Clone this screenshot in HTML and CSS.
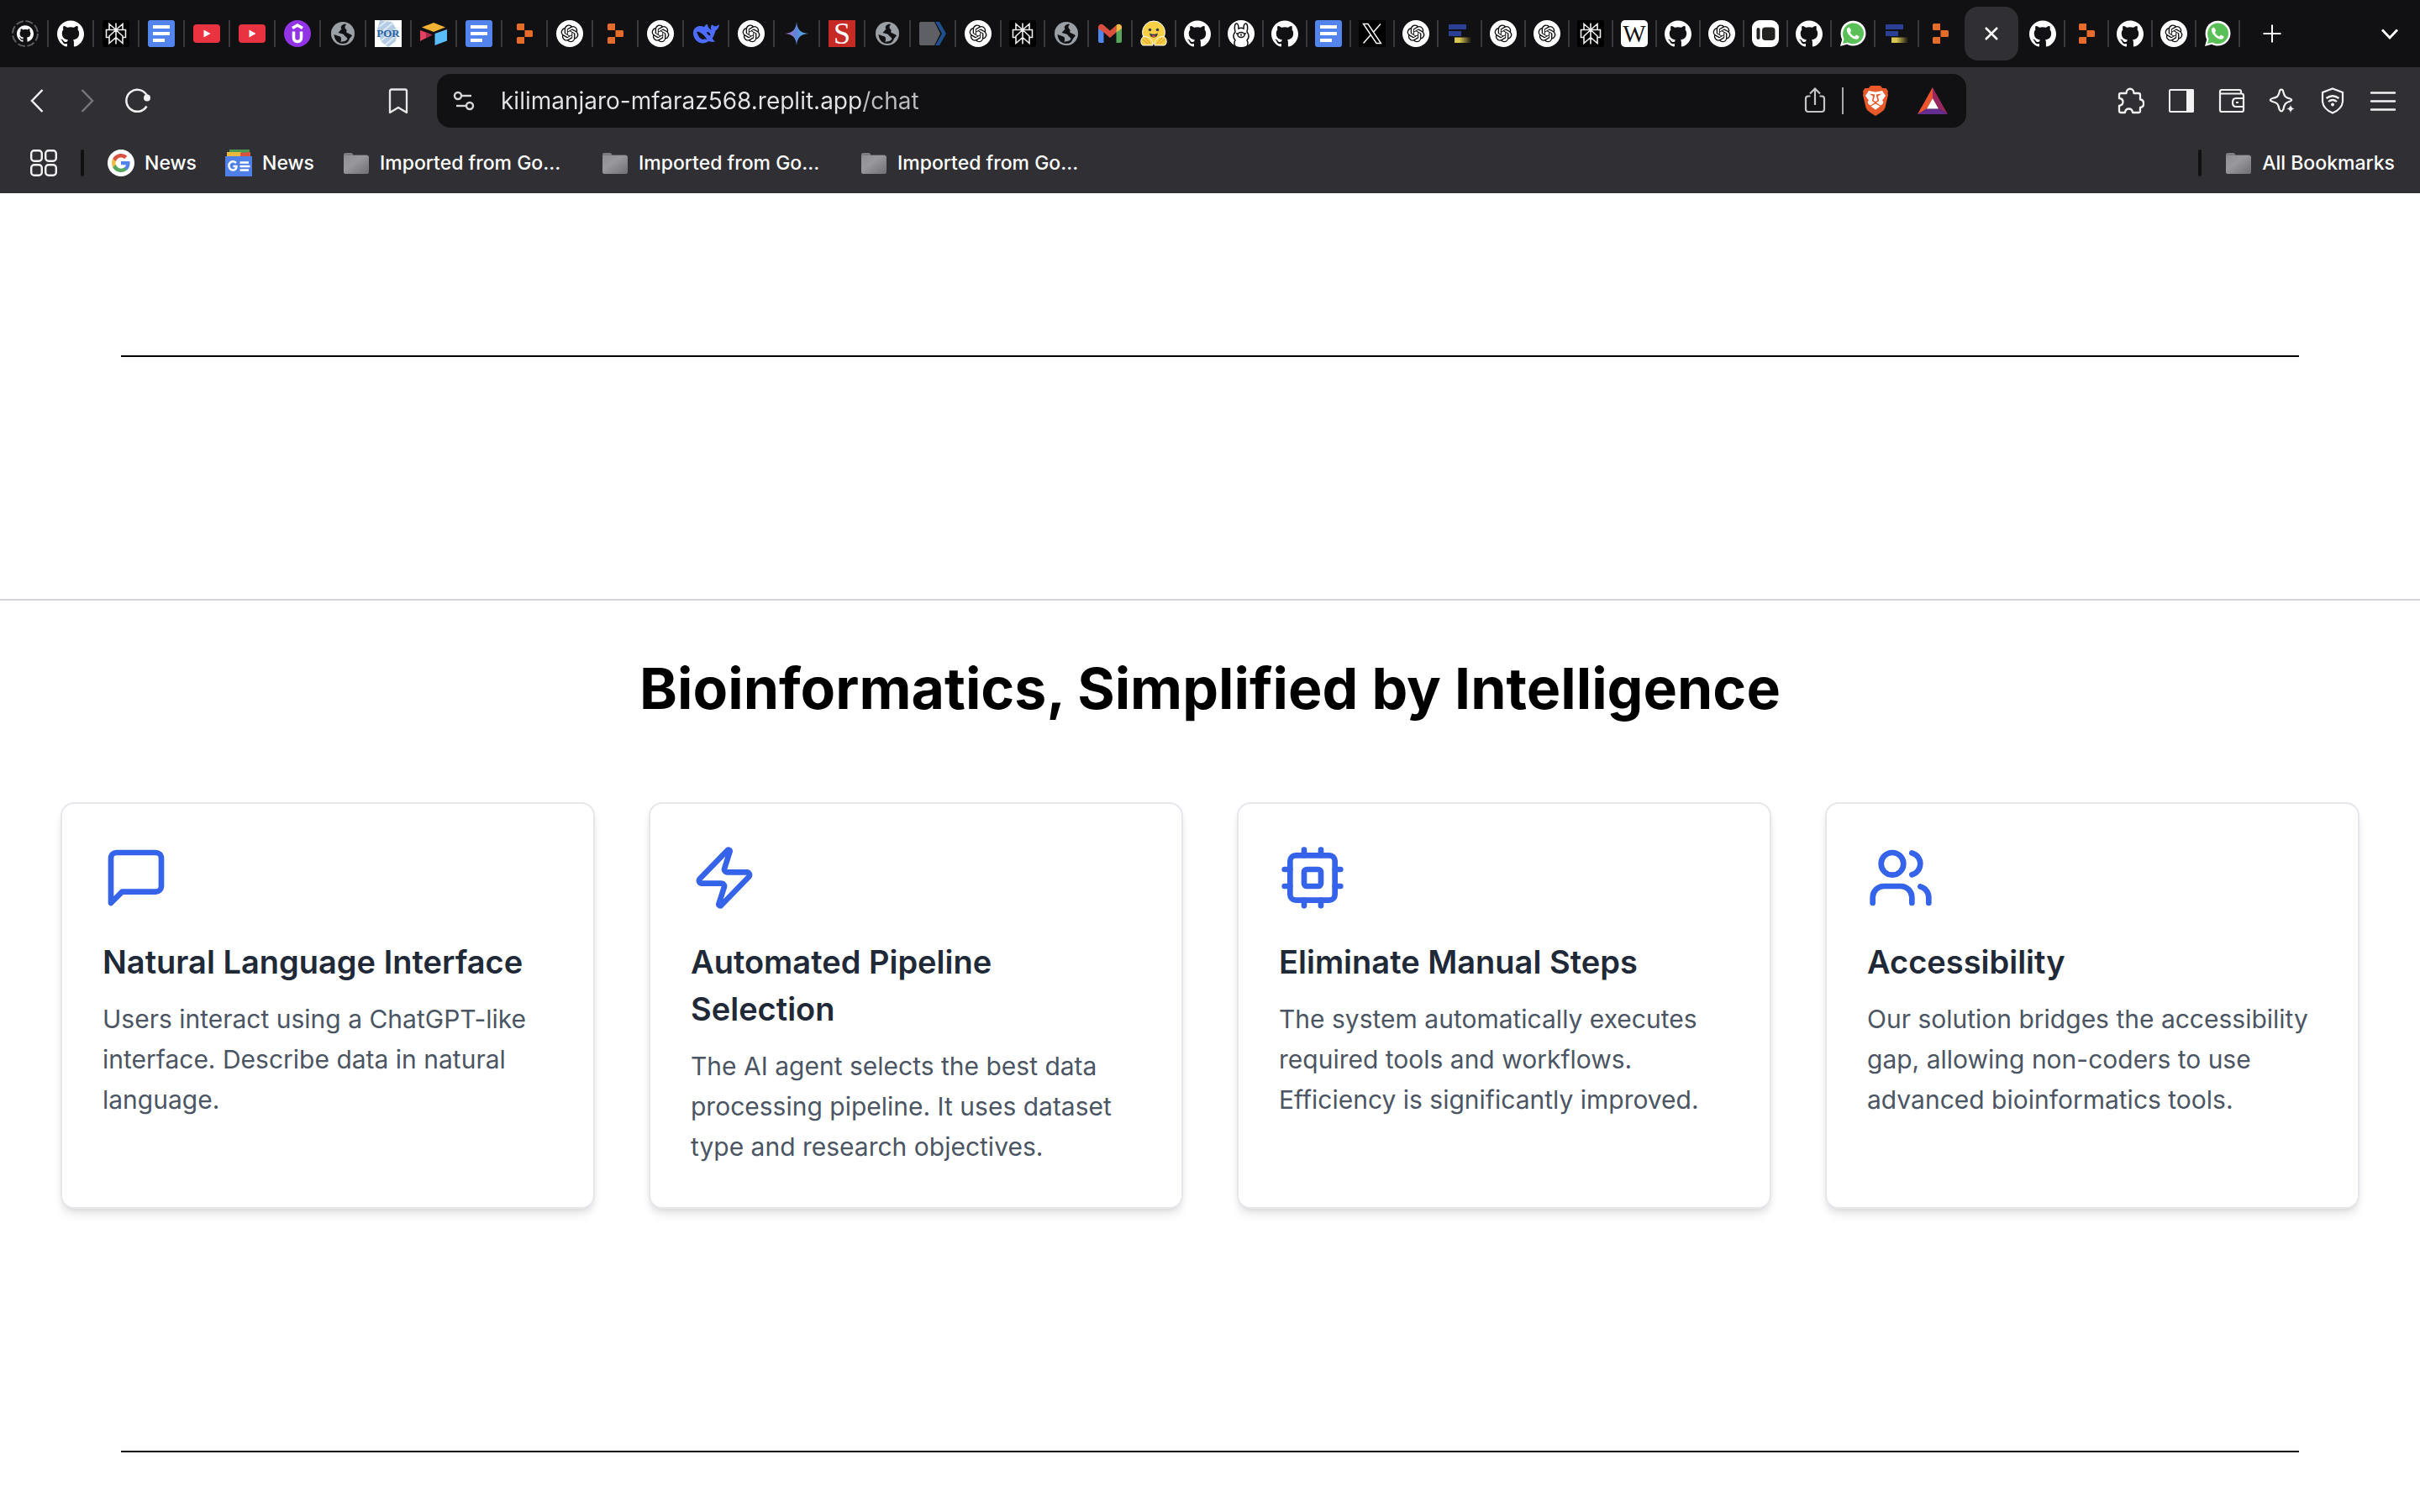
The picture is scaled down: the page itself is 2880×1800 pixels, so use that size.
FILE: index.html
```html
<!DOCTYPE html>
<html lang="en">
<head>
<meta charset="utf-8">
<meta name="viewport" content="width=device-width, initial-scale=1">
<title>Bioinformatics, Simplified by Intelligence</title>
<link rel="stylesheet" href="styles.css">
</head>
<body>
<svg class="sprite" aria-hidden="true">
  <defs>
    <linearGradient id="gem" x1="0" y1="0" x2="1" y2="0"><stop offset="0.1" stop-color="#a070c0"/><stop offset="0.5" stop-color="#5b87d8"/><stop offset="0.9" stop-color="#4cb0e0"/></linearGradient>
    <linearGradient id="gold" x1="0" y1="0" x2="1" y2="0"><stop offset="0.3" stop-color="#d8c650"/><stop offset="1" stop-color="#d8c650" stop-opacity="0"/></linearGradient>
    <linearGradient id="steel" x1="0" y1="0" x2="1" y2="1"><stop offset="0" stop-color="#8e8e93"/><stop offset="0.4" stop-color="#98989d"/><stop offset="1" stop-color="#707074"/></linearGradient>
  </defs>
  <symbol id="github" viewBox="0 0 24 24"><path fill="#fff" d="M12 .297c-6.63 0-12 5.373-12 12 0 5.303 3.438 9.8 8.205 11.385.6.113.82-.258.82-.577 0-.285-.01-1.04-.015-2.04-3.338.724-4.042-1.61-4.042-1.61C4.422 18.07 3.633 17.7 3.633 17.7c-1.087-.744.084-.729.084-.729 1.205.084 1.838 1.236 1.838 1.236 1.07 1.835 2.809 1.305 3.495.998.108-.776.417-1.305.76-1.605-2.665-.3-5.466-1.332-5.466-5.93 0-1.31.465-2.38 1.235-3.22-.135-.303-.54-1.523.105-3.176 0 0 1.005-.322 3.3 1.23.96-.267 1.98-.399 3-.405 1.02.006 2.04.138 3 .405 2.28-1.552 3.285-1.23 3.285-1.23.645 1.653.24 2.873.12 3.176.765.84 1.23 1.91 1.23 3.22 0 4.61-2.805 5.625-5.475 5.92.42.36.81 1.096.81 2.22 0 1.606-.015 2.896-.015 3.286 0 .315.21.69.825.57C20.565 22.092 24 17.592 24 12.297c0-6.627-5.373-12-12-12"/></symbol>
  <symbol id="github-busy" viewBox="0 0 32 32"><circle cx="16" cy="16" r="15" fill="none" stroke="#5e5e62" stroke-width="2" stroke-dasharray="9 2.8"/><use href="#github" x="6" y="6" width="20" height="20"/></symbol>
  <symbol id="openai" viewBox="0 0 32 32"><circle cx="16" cy="16" r="16" fill="#fff"/><path transform="translate(5.6 5.4) scale(.87)" fill="#111" d="M22.2819 9.8211a5.9847 5.9847 0 0 0-.5157-4.9108 6.0462 6.0462 0 0 0-6.5098-2.9A6.0651 6.0651 0 0 0 4.9807 4.1818a5.9847 5.9847 0 0 0-3.9977 2.9 6.0462 6.0462 0 0 0 .7427 7.0966 5.98 5.98 0 0 0 .511 4.9107 6.051 6.051 0 0 0 6.5146 2.9001A5.9847 5.9847 0 0 0 13.2599 24a6.0557 6.0557 0 0 0 5.7718-4.2058 5.9894 5.9894 0 0 0 3.9977-2.9001 6.0557 6.0557 0 0 0-.7475-7.0729zm-9.022 12.6081a4.4755 4.4755 0 0 1-2.8764-1.0408l.1419-.0804 4.7783-2.7582a.7948.7948 0 0 0 .3927-.6813v-6.7369l2.02 1.1686a.071.071 0 0 1 .038.052v5.5826a4.504 4.504 0 0 1-4.4945 4.4944zm-9.6607-4.1254a4.4708 4.4708 0 0 1-.5346-3.0137l.142.0852 4.783 2.7582a.7712.7712 0 0 0 .7806 0l5.8428-3.3685v2.3324a.0804.0804 0 0 1-.0332.0615L9.74 19.9502a4.4992 4.4992 0 0 1-6.1408-1.6464zM2.3408 7.8956a4.485 4.485 0 0 1 2.3655-1.9728V11.6a.7664.7664 0 0 0 .3879.6765l5.8144 3.3543-2.0201 1.1685a.0757.0757 0 0 1-.071 0l-4.8303-2.7865A4.504 4.504 0 0 1 2.3408 7.872zm16.5963 3.8558L13.1038 8.364 15.1192 7.2a.0757.0757 0 0 1 .071 0l4.8303 2.7913a4.4944 4.4944 0 0 1-.6765 8.1042v-5.6772a.79.79 0 0 0-.407-.667zm2.0107-3.0231l-.142-.0852-4.7735-2.7818a.7759.7759 0 0 0-.7854 0L9.409 9.2297V6.8974a.0662.0662 0 0 1 .0284-.0615l4.8303-2.7866a4.4992 4.4992 0 0 1 6.6802 4.66zM8.3065 12.863l-2.02-1.1638a.0804.0804 0 0 1-.038-.0567V6.0742a4.4992 4.4992 0 0 1 7.3757-3.4537l-.142.0805L8.704 5.459a.7948.7948 0 0 0-.3927.6813zm1.0976-2.3654l2.602-1.4998 2.6069 1.4998v2.9994l-2.5974 1.4997-2.6067-1.4997Z"/></symbol>
  <symbol id="perplexity" viewBox="0 0 32 32"><rect width="32" height="32" rx="3" fill="#000"/><g fill="none" stroke="#eee" stroke-width="1.6"><path d="M16 3.500V28.500M16 11.500L8 4.500V11.500M16 11.500L24 4.500V11.500M8 20.500H4.500V11.500H27.500V20.500H24M16 11.500L8 19V27.500L16 20.500L24 27.500V19L16 11.500"/></g></symbol>
  <symbol id="docs" viewBox="0 0 32 32"><rect width="32" height="32" rx="3" fill="#5383ec"/><path fill="#fff" d="M6 6h20v4H6zM6 14h20v4H6zM6 22h14v4H6z"/></symbol>
  <symbol id="youtube" viewBox="0 0 32 32"><rect y="5" width="32" height="22" rx="4" fill="#ea3340"/><path fill="#fff" d="M12.500 11.500L20.500 16L12.500 20.500z"/></symbol>
  <symbol id="udemy" viewBox="0 0 32 32"><circle cx="16" cy="16" r="16" fill="#9333e6"/><path fill="none" stroke="#fff" stroke-width="3.600" d="M10 9.500L16 6L22 9.500M11.500 13.500V21C11.500 27 20.500 27 20.500 21V13.500"/></symbol>
  <symbol id="globe" viewBox="0 0 32 32"><circle cx="16" cy="16" r="14" fill="#9aa0a6"/><path fill="#111113" d="M18.500 4.500C13.500 6 13 8.500 14.500 10.500L10.500 15L16 16.500C18.500 17.500 18 19.500 19.500 19.500L21.500 22C20.500 25 16.500 25.500 13.500 25.800C15 21 13.500 19.500 11 19L5.500 17C6 24 10.500 28 16 28C21 28 23 25 24 22L27 18.500C25.500 16 22 16.500 20 14C22 11 19 11.500 18.500 8.500C18 6.500 20 6 20 5z"/></symbol>
  <symbol id="airtable" viewBox="0 0 32 32"><path fill="#f2b236" d="M16 3L30 8.500L16 14L2 8.500z"/><path fill="#5abdf8" d="M17.500 16L32 11V24.500L17.500 30z"/><path fill="#e24160" d="M0 12L14.500 17.500L0 25z"/><path fill="#a82b4b" d="M7 14.500L14.500 17.500L7 21.300z"/></symbol>
  <symbol id="replit" viewBox="-1 0 32 32"><path fill="#e66c2c" d="M6 5.500Q6 4 7.500 4H15V12H7.500Q6 12 6 10.500zM15.500 12H23.500Q25 12 25 13.500V18.500Q25 20 23.500 20H15.500zM7.500 20H15V28H7.500Q6 28 6 26.500V21.500Q6 20 7.500 20z"/></symbol>
  <symbol id="deepseek" viewBox="0 0 32 32"><path fill="#4d6bfe" d="M1 14C2 8 8 5.500 14 8C16 6 15 5 18 5C18 8 20 10 23 12C21 9 22 6 24 5.500C26 8 28 8 32 5C31.500 9 30 11 27.500 12.500C26 18 25 20 23.500 21.500C25 23.500 26 24.500 27 25.500C23 26 21 25.500 19.500 25C15 28.500 8 28.500 4 23.500C1.500 20.500.5 17 1 14z"/><path fill="#111113" d="M5 14C9 13 14 18 17 22.500C17.500 23.500 16 23 14.500 22C13.500 24 9.500 22.500 8 20C6.500 17.500 6 15.500 5 14zM17 14C20 14 21.500 16 21.500 18.500C19 18 17.500 16.500 17 14z"/></symbol>
  <symbol id="gemini" viewBox="0 0 32 32"><path fill="url(#gem)" d="M16 2C17 11 20 15 30 16C20 17 17 21 16 30C15 21 12 17 2 16C12 15 15 11 16 2z"/></symbol>
  <symbol id="arrows" viewBox="0 0 32 32"><path fill="#5f6065" d="M2 2H18L25 16L18 30H2Q0 30 0 28V4Q0 2 2 2z"/><path fill="#1f4f8c" d="M19 2H24L32 16L24 30H19L27 16z"/></symbol>
  <symbol id="gmail" viewBox="0 0 32 32"><path fill="#4f86ec" d="M2 8L8.500 12V27H4Q2 27 2 25z"/><path fill="#58a55c" d="M30 8L23.500 12V27H28Q30 27 30 25z"/><path fill="#da4f3e" d="M2 8C2 5 6 3.500 8.500 6L16 12.500L23.500 6V14.500L16 21L8.500 14.500L2 10z"/><path fill="#f2bd42" d="M23.500 6C26 3.500 30 5 30 8V10L23.500 14.500z"/></symbol>
  <symbol id="hugging" viewBox="0 0 32 32"><circle cx="16" cy="14.500" r="13.500" fill="#f7d046" stroke="#fff"/><path fill="#f7d046" stroke="#fff" d="M1 27C0 21 4 18 8 20C12 21 15 24 15 30H4C2 30 1.500 29 1 27zM31 27C32 21 28 18 24 20C20 21 17 24 17 30H28C30 30 30.500 29 31 27z"/><path stroke="#e0942f" fill="none" d="M3 23L9 28M6 21L12 28M29 23L23 28M26 21L20 28"/><circle cx="11.500" cy="11.500" r="1.800" fill="#3a3b45"/><circle cx="20.500" cy="11.500" r="1.800" fill="#3a3b45"/><path fill="#3a3b45" d="M11 15.500Q16 18 21 15.500Q20.500 20.500 16 20.500Q11.500 20.500 11 15.500z"/><path fill="#ef4e4e" d="M13.500 19Q16 17 18.500 19Q16 21 13.500 19z"/></symbol>
  <symbol id="ollama" viewBox="0 0 32 32"><circle cx="16" cy="16" r="16" fill="#fff"/><g fill="none" stroke="#111" stroke-width="1.500"><path d="M9 31C7.500 28 7.500 26 9 24C6.500 21 6.500 17 9 14C7.500 9 8.500 4 10.500 4C12.500 4 13 7 13 10Q16 8.500 19 10C19 7 19.500 4 21.500 4C23.500 4 24.500 9 23 14C25.500 17 25.500 21 23 24C24.500 26 24.500 28 23 31"/><ellipse cx="16" cy="17.500" rx="4" ry="3"/></g><circle cx="11" cy="16" r="1" fill="#111"/><circle cx="21" cy="16" r="1" fill="#111"/><path stroke="#111" d="M15 17H17M16 17V19"/></symbol>
  <symbol id="xmark" viewBox="0 0 32 32"><path fill="#000" d="M0 0h32v32H0z"/><path fill="none" stroke="#fff" stroke-width="1.400" d="M5.500 4.500H11L26.500 27.500H21zM26 4.500L17.500 14.300M5.500 27.500L14.500 17.200"/></symbol>
  <symbol id="bars" viewBox="0 0 32 32"><path fill="#2b3f94" d="M3 5h21v6H3zM3 13h15v6H3z"/><path fill="url(#gold)" d="M10 20.500h20v6.500H10z"/></symbol>
  <symbol id="panes" viewBox="0 0 32 32"><rect width="32" height="32" rx="9" fill="#fff"/><rect x="5.500" y="9" width="4" height="14" rx="2" fill="#222220"/><rect x="12" y="8.500" width="15.500" height="15.500" rx="4" fill="#222220"/></symbol>
  <symbol id="whatsapp" viewBox="0 0 32 32"><path fill="#fff" d="M1 31L3.200 23C-1.500 13 4.500 .8 16.500 .8C25 .8 31.500 7.500 31.500 15.700C31.500 27 19 34 9 28.800z"/><path fill="#58c057" d="M4 28L5.600 22.200C1.500 13.500 7 3.400 16.500 3.400C23.500 3.400 29 9 29 15.700C29 25.500 18.500 31.200 9.700 26.400z"/><path fill="#fff" d="M12 8.800C11 8.500 9.500 9 9 11C8 15 14.500 22.500 20 22.800C22.500 22.800 23.800 21 23.500 19.300L20 17.500L18.200 19.500C15.800 18.800 13.800 16.800 12.900 14.500L14.300 12.600z"/></symbol>
  <symbol id="folder" viewBox="0 0 32 32"><path fill="#7c7c80" d="M1 6Q1 4 3 4H10Q12 4 12.500 6.500H29V12H1z"/><rect x="1" y="7" width="30" height="22" rx="2" fill="url(#steel)"/></symbol>
</svg>

<header class="browser">
  <nav class="tabs" role="tablist" aria-label="Tabs">
    <button class="tab"><svg><use href="#github-busy"/></svg></button>
    <button class="tab"><svg><use href="#github"/></svg></button>
    <button class="tab"><svg><use href="#perplexity"/></svg></button>
    <button class="tab"><svg><use href="#docs"/></svg></button>
    <button class="tab"><svg><use href="#youtube"/></svg></button>
    <button class="tab"><svg><use href="#youtube"/></svg></button>
    <button class="tab"><svg><use href="#udemy"/></svg></button>
    <button class="tab"><svg><use href="#globe"/></svg></button>
    <button class="tab"><svg viewBox="0 0 32 32"><path fill="#fff" d="M0 0h32v32H0z"/><path fill="#b5cde4" d="M6 0L20 2L27 12L25 25L16 32L8 26L3 12z"/><path stroke="#dfeaf5" stroke-width="2" d="M5 8L14 1M6 16L22 3M8 24L26 10M12 30L26 18"/><text x="16" y="20" text-anchor="middle" font-family="Liberation Serif, serif" font-weight="700" font-size="13" fill="#2c62a0">POR</text></svg></button>
    <button class="tab"><svg><use href="#airtable"/></svg></button>
    <button class="tab"><svg><use href="#docs"/></svg></button>
    <button class="tab"><svg><use href="#replit"/></svg></button>
    <button class="tab"><svg><use href="#openai"/></svg></button>
    <button class="tab"><svg><use href="#replit"/></svg></button>
    <button class="tab"><svg><use href="#openai"/></svg></button>
    <button class="tab"><svg><use href="#deepseek"/></svg></button>
    <button class="tab"><svg><use href="#openai"/></svg></button>
    <button class="tab"><svg><use href="#gemini"/></svg></button>
    <button class="tab"><svg viewBox="0 0 32 32"><path fill="#c52a25" d="M0 0h32v32H0z"/><text x="16" y="28" text-anchor="middle" font-family="Liberation Serif, serif" font-size="36" fill="#fff">S</text></svg></button>
    <button class="tab"><svg><use href="#globe"/></svg></button>
    <button class="tab"><svg><use href="#arrows"/></svg></button>
    <button class="tab"><svg><use href="#openai"/></svg></button>
    <button class="tab slim"><svg><use href="#perplexity"/></svg></button>
    <button class="tab slim"><svg><use href="#globe"/></svg></button>
    <button class="tab slim"><svg><use href="#gmail"/></svg></button>
    <button class="tab slim"><svg><use href="#hugging"/></svg></button>
    <button class="tab slim"><svg><use href="#github"/></svg></button>
    <button class="tab slim"><svg><use href="#ollama"/></svg></button>
    <button class="tab slim"><svg><use href="#github"/></svg></button>
    <button class="tab slim"><svg><use href="#docs"/></svg></button>
    <button class="tab slim"><svg><use href="#xmark"/></svg></button>
    <button class="tab slim"><svg><use href="#openai"/></svg></button>
    <button class="tab slim"><svg><use href="#bars"/></svg></button>
    <button class="tab slim"><svg><use href="#openai"/></svg></button>
    <button class="tab slim"><svg><use href="#openai"/></svg></button>
    <button class="tab slim"><svg><use href="#perplexity"/></svg></button>
    <button class="tab slim"><svg viewBox="0 0 32 32"><rect width="32" height="32" rx="5" fill="#fff"/><text x="16" y="26" text-anchor="middle" font-family="Liberation Serif, serif" font-size="29" fill="#111">W</text></svg></button>
    <button class="tab slim"><svg><use href="#github"/></svg></button>
    <button class="tab slim"><svg><use href="#openai"/></svg></button>
    <button class="tab slim"><svg><use href="#panes"/></svg></button>
    <button class="tab slim"><svg><use href="#github"/></svg></button>
    <button class="tab slim"><svg><use href="#whatsapp"/></svg></button>
    <button class="tab slim"><svg><use href="#bars"/></svg></button>
    <button class="tab slim last"><svg><use href="#replit"/></svg></button>
    <button class="tab active" aria-label="Close tab"><svg viewBox="0 0 32 32"><path fill="none" stroke="#fff" stroke-width="2.500" d="M9 9L23 23M23 9L9 23"/></svg></button>
    <button class="tab slim"><svg><use href="#github"/></svg></button>
    <button class="tab slim"><svg><use href="#replit"/></svg></button>
    <button class="tab slim"><svg><use href="#github"/></svg></button>
    <button class="tab slim"><svg><use href="#openai"/></svg></button>
    <button class="tab slim"><svg><use href="#whatsapp"/></svg></button>
    <button class="new-tab" aria-label="New tab"><svg viewBox="0 0 32 32"><path fill="none" stroke="#fff" stroke-width="2" d="M16 5.500V26.500M5.500 16H26.500"/></svg></button>
    <button class="tab-search" aria-label="Search tabs"><svg viewBox="0 0 32 32"><path fill="none" stroke="#fff" stroke-width="2.800" d="M7 11.500L16 21L25 11.500"/></svg></button>
  </nav>

  <div class="toolbar">
    <div class="toolbar-start">
      <button class="tool" aria-label="Back"><svg viewBox="0 0 32 32"><path fill="none" stroke="#f2f2f4" stroke-width="2.500" d="M22.500 3L10 16L22.500 29"/></svg></button>
      <button class="tool" aria-label="Forward"><svg viewBox="0 0 32 32"><path fill="none" stroke="#77767b" stroke-width="2.500" d="M9.500 3L22 16L9.500 29"/></svg></button>
      <button class="tool" aria-label="Reload"><svg viewBox="0 0 32 32"><path fill="none" stroke="#f2f2f4" stroke-width="2.500" d="M26.500 22.500A13 13 0 1 1 27 10"/><circle cx="27" cy="12.500" r="4" fill="#f2f2f4"/></svg></button>
      <button class="tool push" aria-label="Bookmark"><svg viewBox="0 0 32 32"><path fill="none" stroke="#e8e8ea" stroke-width="2.300" stroke-linejoin="round" d="M6 30V4.500Q6 2.500 8 2.500H24Q26 2.500 26 4.500V30L16 24z"/></svg></button>
    </div>
    <div class="address">
      <button class="bare" aria-label="Site settings"><svg viewBox="0 0 32 32"><g fill="none" stroke="#d6d6d8" stroke-width="2.400"><circle cx="9" cy="10" r="4"/><path d="M13 10H25"/><circle cx="23" cy="22" r="4"/><path d="M7 22H19"/></g></svg></button>
      <input class="url" type="text" aria-label="Address" value="kilimanjaro-mfaraz568.replit.app/chat">
      <button class="bare" aria-label="Share"><svg viewBox="0 0 32 32"><path fill="none" stroke="#c4c4c6" stroke-width="2.200" d="M10.500 10.500H8Q5 10.500 5 13.500V26Q5 29 8 29H24Q27 29 27 26V13.500Q27 10.500 24 10.500H21.500M16 21V1.500M10 7.500L16 1.500L22 7.500"/></svg></button>
      <span class="address-rule"></span>
      <button class="bare shield" aria-label="Shields"><svg viewBox="0 0 32 36"><path fill="#e9592a" d="M10.500 0H21.500L24.500 3H28.500L31 6.500L30.500 9L31 11L27.500 26Q26.500 29.500 23 31.500L16 36L9 31.500Q5.500 29.500 4.500 26L1 11L1.500 9L1 6.500L3.500 3H7.500z"/><path fill="#fff" d="M8 6L16 7.500L24 6L28 12L24 17.500L25.500 19.500Q25 22.500 22 23.500L16 19.500L10 23.500Q7 22.500 6.500 19.500L8 17.500L4 12zM10.500 24.500L16 21.500L21.500 24.500L16 28.800z"/><path fill="#e9592a" d="M8.500 9.500L15 10.500V12.500L13.500 17.500L16 19L18.500 17.500L17 12.500V10.500L23.500 9.500L18.800 12.800L20.300 18L16 20.800L11.700 18L13.200 12.800z"/></svg></button>
      <button class="bare rewards" aria-label="Rewards"><svg viewBox="0 0 36 32"><path fill="#ef5431" d="M18 0L0 32L11 25.500L18 13z"/><path fill="#96285f" d="M18 0L36 32L25 25.500L18 13z"/><path fill="#662d91" d="M0 32H36L25 25.500H11z"/><path fill="#fff" d="M18 13L25 25.500H11z"/></svg></button>
    </div>
    <div class="toolbar-end">
      <button class="tool" aria-label="Extensions"><svg viewBox="0 0 32 32"><path fill="none" stroke="#f2f2f4" stroke-width="2.300" stroke-linejoin="round" d="M4 7H10.500C10.500 0 19.500 0 19.500 7H25Q27 7 27 9V14.500C32.500 15 32.500 23.500 27 24V28Q27 30 25 30H18C17.500 24 9.500 24 9 30H4Q2 30 2 28V22C8 21 8 13.500 2 13V9Q2 7 4 7z"/></svg></button>
      <button class="tool" aria-label="Sidebar"><svg viewBox="0 0 32 32"><rect x="2" y="3" width="28" height="26" rx="1" fill="none" stroke="#f2f2f4" stroke-width="2"/><path fill="#f2f2f4" d="M22 2H29Q31 2 31 4V28Q31 30 29 30H22z"/></svg></button>
      <button class="tool" aria-label="Wallet"><svg viewBox="0 0 32 32"><path fill="none" stroke="#f2f2f4" stroke-width="2.200" d="M27 7V5Q27 3 25 3H4Q2 3 2 5V27Q2 29 4 29H28Q30 29 30 27V10Q30 7.500 27.500 7.500H2M30 13H21Q17 13 17 18Q17 23 21 23H30M21 18H24"/></svg></button>
      <button class="tool" aria-label="Assistant"><svg viewBox="0 0 32 32"><path fill="none" stroke="#f2f2f4" stroke-width="2.200" stroke-linejoin="round" d="M15 2.500Q17 2.500 17.500 6C18.500 10.500 20 12.500 25.500 13.500Q29 15 25.500 16.500C20 18 18.500 20 17.500 26Q15 31 12.500 26C11.500 20 10 18 4.500 17Q-1 15 4.500 13C10 12 11.500 10.500 12.500 6Q13 2.500 15 2.500z"/><path fill="#f2f2f4" stroke="#302f34" d="M26 19C27 23.500 27.500 24.500 32 25.500C27.500 26.500 27 27.500 26 32C25 27.500 24.500 26.500 20 25.500C24.500 24.500 25 23.500 26 19z"/></svg></button>
      <button class="tool" aria-label="VPN"><svg viewBox="0 0 32 32"><g fill="none" stroke="#f2f2f4" stroke-width="2.200"><path d="M16 1.500L28 6V17Q27 26 16 30.500Q5 26 4 17V6z"/><path d="M8.500 13Q16 7.500 23.500 13M11 17Q16 13 21 17"/></g><circle cx="16" cy="20.500" r="2" fill="#f2f2f4"/></svg></button>
      <button class="tool" aria-label="Menu"><svg viewBox="0 0 32 32"><path stroke="#f2f2f4" stroke-width="2.400" stroke-linecap="round" d="M2 6.500H30M2 16.500H30M2 26.500H30"/></svg></button>
    </div>
  </div>

  <nav class="bookmarks" aria-label="Bookmarks">
    <button class="bare" aria-label="Tab groups"><svg viewBox="0 0 32 32"><g fill="none" stroke="#f2f2f4" stroke-width="2.400"><rect x="1.200" y="1.200" width="12.600" height="12.600" rx="3.500"/><rect x="18.200" y="1.200" width="12.600" height="12.600" rx="3.500"/><rect x="1.200" y="18.200" width="12.600" height="12.600" rx="3.500"/><rect x="18.200" y="18.200" width="12.600" height="12.600" rx="3.500"/></g></svg></button>
    <span class="bar-rule"></span>
    <div class="bookmark-list">
      <a class="bookmark" href="#"><svg viewBox="0 0 32 32"><circle cx="16" cy="16" r="16" fill="#fff"/><g transform="translate(4 4)"><path fill="#5383ec" d="M22.560 12.250c0-.78-.07-1.530-.2-2.250H12v4.260h5.920c-.26 1.370-1.040 2.530-2.210 3.310v2.770h3.570c2.080-1.920 3.280-4.740 3.280-8.090z"/><path fill="#58a55c" d="M12 23c2.970 0 5.460-.98 7.280-2.660l-3.570-2.770c-.98.66-2.230 1.060-3.710 1.060-2.860 0-5.290-1.930-6.160-4.530H2.180v2.840C3.990 20.530 7.700 23 12 23z"/><path fill="#f2bd42" d="M5.840 14.090c-.22-.66-.35-1.360-.35-2.090s.13-1.430.35-2.090V7.070H2.180C1.430 8.550 1 10.220 1 12s.43 3.450 1.180 4.930l3.660-2.840z"/><path fill="#d95140" d="M12 5.380c1.620 0 3.060.56 4.210 1.640l3.150-3.150C17.450 2.090 14.970 1 12 1 7.700 1 3.990 3.470 2.180 7.070l3.660 2.840c.87-2.600 3.300-4.530 6.160-4.530z"/></g></svg><span>News</span></a>
      <a class="bookmark" href="#"><svg viewBox="0 0 32 32"><path fill="#4c9a52" d="M5 0h24v5H5z"/><path fill="#e9b83c" d="M2 3h17v6H2z"/><path fill="#d95140" d="M18 4l12-1v6H18z"/><path fill="#4f80e8" d="M0 8h32v24H0z"/><path fill="none" stroke="#fff" stroke-width="2.500" d="M13 16Q10.500 13.500 7.500 14.500Q4 16 4.500 20Q5.500 24.500 9.500 24.500Q13.500 24 13.500 20H9.500M17.500 15.500H28M17.500 20H29.500M17.500 24.500H28"/></svg><span>News</span></a>
      <a class="bookmark" href="#"><svg><use href="#folder"/></svg><span class="long">Imported from Go...</span></a>
      <a class="bookmark" href="#"><svg><use href="#folder"/></svg><span class="long">Imported from Go...</span></a>
      <a class="bookmark" href="#"><svg><use href="#folder"/></svg><span class="long">Imported from Go...</span></a>
    </div>
    <span class="bar-rule"></span>
    <a class="bookmark" href="#"><svg><use href="#folder"/></svg><span>All Bookmarks</span></a>
  </nav>
</header>

<main class="page">
  <hr class="divider">
  <section class="features">
    <h1 class="heading">Bioinformatics, Simplified by Intelligence</h1>
    <div class="cards">
      <article class="card">
        <svg class="card-icon" viewBox="0 0 24 24"><path d="M21 15a2 2 0 0 1-2 2H7l-4 4V5a2 2 0 0 1 2-2h14a2 2 0 0 1 2 2z"/></svg>
        <h2 class="card-title">Natural Language Interface</h2>
        <p class="card-text">Users interact using a ChatGPT-like interface. Describe data in natural language.</p>
      </article>
      <article class="card">
        <svg class="card-icon" viewBox="0 0 24 24"><path d="M4 14a1 1 0 0 1-.78-1.630l9.900-10.200a.5.5 0 0 1 .86.460l-1.920 6.020A1 1 0 0 0 13 10h7a1 1 0 0 1 .78 1.630l-9.900 10.200a.5.5 0 0 1-.86-.460l1.920-6.020A1 1 0 0 0 11 14z"/></svg>
        <h2 class="card-title">Automated Pipeline Selection</h2>
        <p class="card-text">The AI agent selects the best data processing pipeline. It uses dataset type and research objectives.</p>
      </article>
      <article class="card">
        <svg class="card-icon" viewBox="0 0 24 24"><rect width="16" height="16" x="4" y="4" rx="2"/><rect width="6" height="6" x="9" y="9" rx="1"/><path d="M15 2v2M15 20v2M2 15h2M2 9h2M20 15h2M20 9h2M9 2v2M9 20v2"/></svg>
        <h2 class="card-title">Eliminate Manual Steps</h2>
        <p class="card-text">The system automatically executes required tools and workflows. Efficiency is significantly improved.</p>
      </article>
      <article class="card">
        <svg class="card-icon" viewBox="0 0 24 24"><path d="M16 21v-2a4 4 0 0 0-4-4H6a4 4 0 0 0-4 4v2"/><circle cx="9" cy="7" r="4"/><path d="M22 21v-2a4 4 0 0 0-3-3.870M16 3.130a4 4 0 0 1 0 7.750"/></svg>
        <h2 class="card-title">Accessibility</h2>
        <p class="card-text">Our solution bridges the accessibility gap, allowing non-coders to use advanced bioinformatics tools.</p>
      </article>
    </div>
  </section>
  <hr class="divider">
</main>
</body>
</html>
```

FILE: styles.css
```css
* {
  box-sizing: border-box;
}

body {
  margin: 0;
  background: #fff;
  font-family: Inter, "Liberation Sans", sans-serif;
}

button {
  display: flex;
  align-items: center;
  justify-content: center;
  padding: 0;
  border: 0;
  background: none;
}

.sprite {
  position: absolute;
  width: 0;
  height: 0;
}

/* Browser chrome */

.browser {
  background: #302f34;
  color: #fff;
}

.browser button svg,
.bookmark svg {
  display: block;
  flex: none;
  width: 32px;
  height: 32px;
}

.tabs {
  display: flex;
  align-items: center;
  height: 80px;
  padding: 0 20px 0 4px;
  background: #111113;
}

.tab {
  flex: none;
  width: 54px;
  height: 32px;
  border-right: 2px solid #3a3a3d;
}

.tab.slim {
  width: 52px;
}

.tab.last {
  border-color: transparent;
}

.tab.active {
  width: 64px;
  height: 64px;
  margin: 0 4px 0 2px;
  border: 0;
  border-radius: 16px;
  background: #302f34;
}

.new-tab {
  width: 32px;
  margin-left: 22px;
}

.tab-search {
  width: 32px;
  margin-left: auto;
}

.toolbar {
  display: flex;
  align-items: center;
  height: 80px;
}

.toolbar-start {
  display: flex;
  width: 520px;
  padding: 0 16px 0 14px;
}

.toolbar-end {
  display: flex;
  justify-content: flex-end;
  width: 540px;
  padding-right: 14px;
}

.tool {
  flex: none;
  width: 60px;
  height: 64px;
}

.push {
  margin-left: auto;
}

.bare {
  flex: none;
}

.address {
  display: flex;
  flex: 1;
  align-items: center;
  height: 64px;
  padding: 0 22px 0 16px;
  border-radius: 16px;
  background: #111113;
}

.url {
  flex: 1;
  min-width: 0;
  height: 40px;
  margin: 0 28px;
  padding: 0;
  border: 0;
  outline: 0;
  background: linear-gradient(to right, #e4e4e6 430px, #bdbdc0 430px);
  background-clip: text;
  color: transparent;
  font-family: inherit;
  font-size: 28px;
}

.address-rule {
  width: 2px;
  height: 32px;
  margin: 0 22px 0 16px;
  background: #a9a9ac;
}

.browser .shield svg {
  height: 36px;
}

.browser .rewards svg {
  width: 36px;
}

.rewards {
  margin-left: 34px;
}

.bookmarks {
  display: flex;
  align-items: center;
  height: 70px;
  padding: 0 30px 2px 36px;
  font-size: 23px;
  font-weight: 500;
}

.bar-rule {
  width: 4px;
  height: 32px;
  margin: 0 28px;
  border-radius: 2px;
  background: #111113;
}

.bookmark-list {
  display: flex;
  flex: 1;
  gap: 34px;
}

.bookmark {
  display: flex;
  align-items: center;
  gap: 12px;
  color: #fff;
  text-decoration: none;
  white-space: nowrap;
}

.bookmark .long {
  width: 230px;
}

/* Page */

.page {
  padding-top: 193px;
}

.divider {
  height: 2px;
  margin: 0 144px 288px;
  border: 0;
  background: #000;
}

.divider:last-child {
  margin-bottom: 71px;
}

.features {
  padding: 64px 72px 288px;
  border-top: 2px solid #d1d5db;
}

.heading {
  margin: 0 0 96px;
  color: #000;
  font-size: 68px;
  font-weight: 700;
  line-height: 80px;
  text-align: center;
}

.cards {
  display: grid;
  grid-template-columns: repeat(4, 1fr);
  gap: 64px;
}

.card {
  padding: 48px;
  border: 2px solid #e5e7eb;
  border-radius: 16px;
  background: #fff;
  box-shadow: 0 8px 12px -2px rgba(0, 0, 0, 0.1), 0 4px 8px -4px rgba(0, 0, 0, 0.1);
}

.card-icon {
  display: block;
  width: 80px;
  height: 80px;
  margin-bottom: 32px;
  fill: none;
  stroke: #3563e9;
  stroke-width: 2;
  stroke-linecap: round;
  stroke-linejoin: round;
}

.card-title {
  margin: 0 0 16px;
  color: #1f2937;
  font-size: 38px;
  font-weight: 600;
  line-height: 56px;
}

.card-text {
  margin: 0;
  color: #4b5563;
  font-size: 30px;
  line-height: 48px;
}
```
